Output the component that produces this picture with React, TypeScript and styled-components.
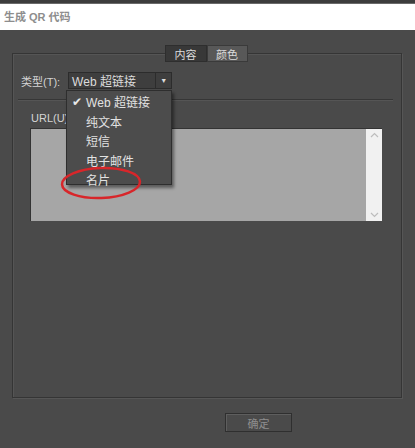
import React from "react";
import styled, { createGlobalStyle } from "styled-components";

const Global = createGlobalStyle`
  html, body { margin: 0; padding: 0; }
  body {
    width: 415px; height: 448px; overflow: hidden;
    background: #4a4a4a;
    font-family: "Liberation Sans", "Noto Sans CJK SC", sans-serif;
  }
`;

const Page = styled.div`
  position: relative;
  width: 415px;
  height: 448px;
  background: #4a4a4a;
  display: flex;
  flex-direction: column;
`;

const TopStrip = styled.div`
  height: 3px;
  background: #3d3d3d;
  border-bottom: 1px solid #6a6a6a;
`;

const TitleBar = styled.div`
  height: 26px;
  background: #ffffff;
  display: flex;
  align-items: center;
  padding-left: 4px;
  padding-bottom: 2px;
  box-sizing: border-box;
  font-size: 11px;
  color: #8d8d8d;
  font-weight: bold;
`;

const Body = styled.div`
  flex: 1;
  display: flex;
  flex-direction: column;
  padding: 23px 0 0 12px;
`;

const Frame = styled.div`
  position: relative;
  width: 388px;
  height: 343px;
  border: 1px solid #353535;
  box-shadow: 1px 1px 0 #565656, inset 1px 1px 0 #555555;
  display: flex;
  flex-direction: column;
`;

const TabBar = styled.div`
  display: flex;
  justify-content: center;
  margin-top: -9px;
  margin-left: -2px;
`;

const Tab = styled.div<{ $active?: boolean }>`
  width: ${(p) => (p.$active ? 42 : 41)}px;
  height: 17px;
  box-sizing: border-box;
  display: flex;
  align-items: center;
  justify-content: center;
  font-size: 11px;
  color: #dcdcdc;
  background: ${(p) => (p.$active ? "#383838" : "#585858")};
  border: 1px solid ${(p) => (p.$active ? "#2e2e2e" : "#3a3a3a")};
`;

const TypeRow = styled.div`
  display: flex;
  align-items: center;
  margin: 10px 0 0 8px;
  gap: 8px;
`;

const Label = styled.span`
  font-size: 11px;
  color: #d4d4d4;
`;

const SelectWrap = styled.div`
  position: relative;
`;

const Select = styled.div`
  width: 104px;
  height: 17px;
  box-sizing: border-box;
  background: #3e3e3e;
  border: 1px solid #2c2c2c;
  display: flex;
  align-items: center;
  font-size: 12px;
  color: #dcdcdc;
`;

const SelectText = styled.span`
  flex: 1;
  padding-left: 3px;
`;

const SelectArrow = styled.span`
  width: 15px;
  height: 100%;
  border-left: 1px solid #2c2c2c;
  display: flex;
  align-items: center;
  justify-content: center;
  font-size: 7px;
  color: #dcdcdc;
`;

const Menu = styled.div`
  position: absolute;
  left: -2px;
  top: 18px;
  width: 106px;
  height: 95px;
  box-sizing: border-box;
  background: #4c4c4c;
  border: 1px solid #2e2e2e;
  box-shadow: 2px 3px 3px rgba(0, 0, 0, 0.45);
  padding-top: 1px;
  z-index: 5;
`;

const MenuItem = styled.div`
  height: 19.5px;
  display: flex;
  align-items: center;
  font-size: 12px;
  color: #e2e2e2;
  padding-left: 19px;
  position: relative;
`;

const Check = styled.span`
  position: absolute;
  left: 5px;
  top: 3px;
  font-size: 12px;
  color: #e8e8e8;
`;

const Divider = styled.div`
  margin: 10px 8px 0 5px;
  height: 1px;
  background: #363636;
  box-shadow: 0 1px 0 #555;
`;

const UrlLabel = styled(Label)`
  margin: 12px 0 0 18px;
`;

const TextArea = styled.div`
  margin: 4px 0 0 17px;
  width: 352px;
  height: 93px;
  background: #a6a6a6;
  border-top: 1px solid #333;
  border-left: 1px solid #333;
  display: flex;
  justify-content: flex-end;
  box-sizing: border-box;
`;

const ScrollBar = styled.div`
  width: 16px;
  background: #f1f1f1;
  display: flex;
  flex-direction: column;
  justify-content: space-between;
  align-items: center;
  padding: 3px 0;
`;

const Footer = styled.div`
  display: flex;
  justify-content: flex-start;
  padding: 15px 0 0 213px;
`;

const Button = styled.div`
  width: 67px;
  height: 19px;
  box-sizing: border-box;
  border: 1px solid #2f2f2f;
  box-shadow: inset 1px 1px 0 #5e5e5e;
  background: #4a4a4a;
  display: flex;
  align-items: center;
  justify-content: center;
  font-size: 11px;
  color: #8e8e8e;
`;

const Annotation = styled.svg`
  position: absolute;
  left: 59px;
  top: 165px;
  pointer-events: none;
  z-index: 10;
`;

const Chevron = ({ up }: { up?: boolean }) => (
  <svg width="9" height="6" viewBox="0 0 9 6">
    <path
      d={up ? "M1 5 L4.5 1.5 L8 5" : "M1 1 L4.5 4.5 L8 1"}
      fill="none"
      stroke="#bdbdbd"
      strokeWidth="1.2"
    />
  </svg>
);

export default function App() {
  const items = ["Web 超链接", "纯文本", "短信", "电子邮件", "名片"];
  return (
    <>
      <Global />
      <Page>
        <TopStrip />
        <TitleBar>生成 QR 代码</TitleBar>
        <Body>
          <Frame>
            <TabBar>
              <Tab $active>内容</Tab>
              <Tab>颜色</Tab>
            </TabBar>
            <TypeRow>
              <Label>类型(T):</Label>
              <SelectWrap>
                <Select>
                  <SelectText>Web 超链接</SelectText>
                  <SelectArrow>▼</SelectArrow>
                </Select>
                <Menu>
                  {items.map((it, i) => (
                    <MenuItem key={it}>
                      {i === 0 && <Check>✔</Check>}
                      {it}
                    </MenuItem>
                  ))}
                </Menu>
              </SelectWrap>
            </TypeRow>
            <Divider />
            <UrlLabel>URL(U)</UrlLabel>
            <TextArea>
              <ScrollBar>
                <Chevron up />
                <Chevron />
              </ScrollBar>
            </TextArea>
          </Frame>
          <Footer>
            <Button>确定</Button>
          </Footer>
        </Body>
        <Annotation width="90" height="40" viewBox="0 0 90 40">
          <ellipse
            cx="42"
            cy="18"
            rx="39"
            ry="15"
            fill="none"
            stroke="#d8262a"
            strokeWidth="2.5"
            transform="rotate(-2 42 18)"
          />
        </Annotation>
      </Page>
    </>
  );
}
